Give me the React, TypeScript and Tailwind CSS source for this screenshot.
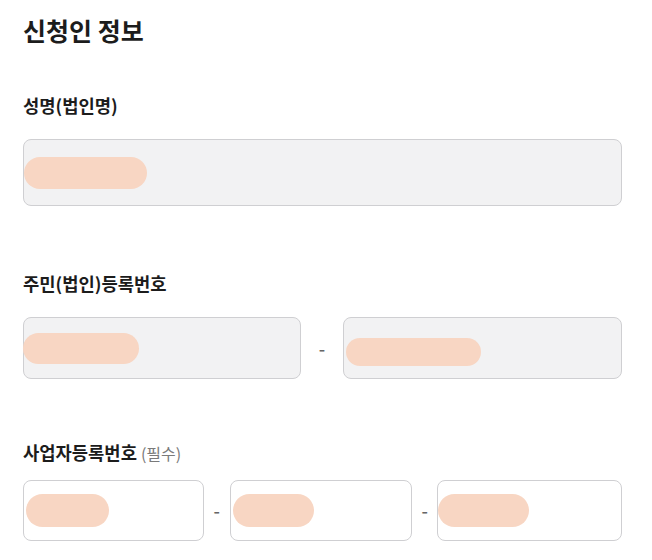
import React from 'react';

const Blot = ({ className }: { className: string }) => (
  <div className={`rounded-full bg-[#f8d6c3] ${className}`} />
);

const Field = ({
  disabled,
  className,
  children,
}: {
  disabled?: boolean;
  className: string;
  children?: React.ReactNode;
}) => (
  <div
    className={`flex items-center rounded-[8px] border border-[#cfcfd2] ${
      disabled ? 'bg-[#f2f2f3]' : 'bg-white'
    } ${className}`}
  >
    {children}
  </div>
);

const Dash = ({ className }: { className: string }) => (
  <span className={`text-center text-[18px] font-medium text-[#666] ${className}`}>-</span>
);

export default function App() {
  return (
    <div
      className="w-[652px] h-[560px] overflow-hidden bg-white pl-[23px] pr-[30px] pt-[13px] text-[#1c1c1c]"
      style={{ fontFamily: '"Noto Sans CJK KR", "Noto Sans", sans-serif' }}
    >
      <h1 className="text-[25px] font-bold leading-[34px]">신청인 정보</h1>

      <div className="mt-[46px] text-[17.7px] font-bold leading-[24px]">성명(법인명)</div>
      <Field disabled className="mt-[22px] h-[67px] w-full">
        <Blot className="h-[32px] w-[123px]" />
      </Field>

      <div className="mt-[65px] text-[17.7px] font-bold leading-[24px]">주민(법인)등록번호</div>
      <div className="mt-[22px] flex items-center">
        <Field disabled className="h-[62px] w-[278px]">
          <Blot className="-ml-[1px] h-[31px] w-[116px]" />
        </Field>
        <Dash className="w-[42px]" />
        <Field disabled className="h-[62px] w-[279px]">
          <Blot className="ml-[2px] mt-[8px] h-[28px] w-[135px]" />
        </Field>
      </div>

      <div className="mt-[61px] flex items-baseline gap-[4px]">
        <span className="text-[17.7px] font-bold leading-[24px]">사업자등록번호</span>
        <span className="text-[16px] text-[#7a7a7a]">(필수)</span>
      </div>
      <div className="mt-[15px] flex items-center">
        <Field className="h-[61px] w-[181px]">
          <Blot className="ml-[2px] h-[33px] w-[83px]" />
        </Field>
        <Dash className="w-[26px]" />
        <Field className="h-[61px] w-[183px]">
          <Blot className="ml-[2px] h-[33px] w-[81px]" />
        </Field>
        <Dash className="w-[25px]" />
        <Field className="h-[61px] w-[185px]">
          <Blot className="h-[33px] w-[91px]" />
        </Field>
      </div>
    </div>
  );
}
